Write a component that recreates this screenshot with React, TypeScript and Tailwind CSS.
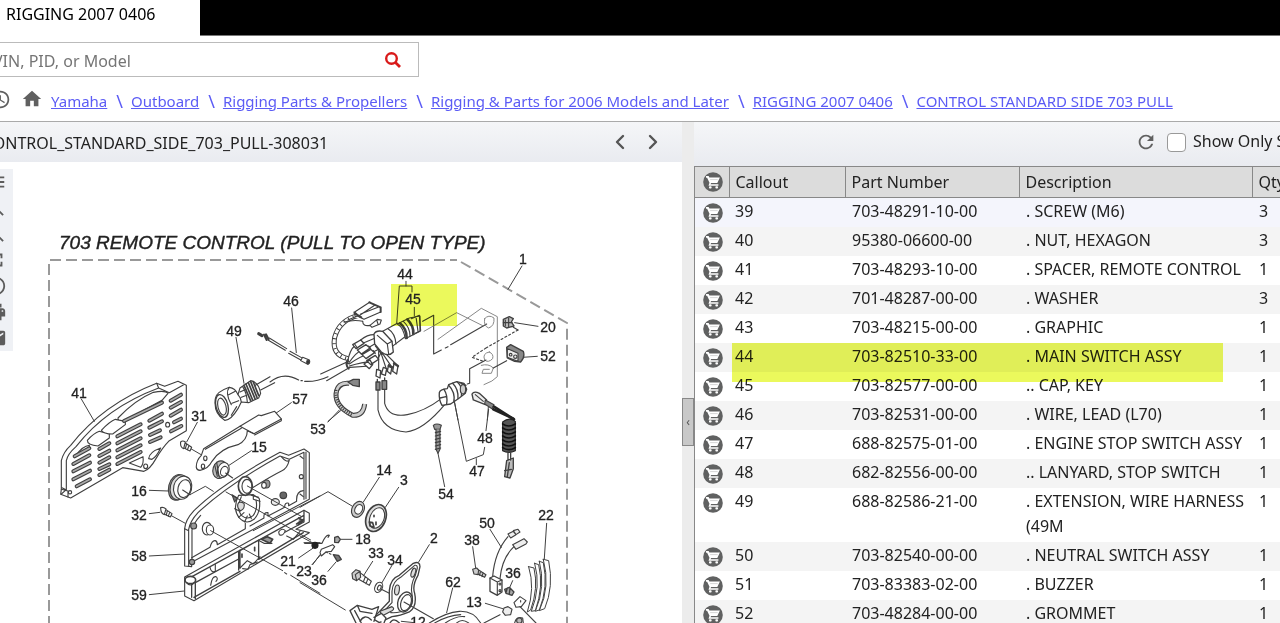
import { ChevronLeft, ChevronRight } from "lucide-react"
import {
  MdAccessTime,
  MdEmail,
  MdFullscreen,
  MdHome,
  MdInfoOutline,
  MdMenu,
  MdPrint,
  MdRefresh,
  MdZoomIn,
  MdZoomOut,
} from "react-icons/md"

const crumbs = [
  "Yamaha",
  "Outboard",
  "Rigging Parts & Propellers",
  "Rigging & Parts for 2006 Models and Later",
  "RIGGING 2007 0406",
  "CONTROL STANDARD SIDE 703 PULL",
]

const tools = [
  { icon: MdMenu, label: "Menu" },
  { icon: MdZoomIn, label: "Zoom in" },
  { icon: MdZoomOut, label: "Zoom out" },
  { icon: MdFullscreen, label: "Fit to screen" },
  { icon: MdInfoOutline, label: "Information" },
  { icon: MdPrint, label: "Print" },
  { icon: MdEmail, label: "Email" },
]

const parts = [
  { callout: "39", number: "703-48291-10-00", description: ". SCREW (M6)", qty: 3 },
  { callout: "40", number: "95380-06600-00", description: ". NUT, HEXAGON", qty: 3 },
  { callout: "41", number: "703-48293-10-00", description: ". SPACER, REMOTE CONTROL", qty: 1 },
  { callout: "42", number: "701-48287-00-00", description: ". WASHER", qty: 3 },
  { callout: "43", number: "703-48215-00-00", description: ". GRAPHIC", qty: 1 },
  { callout: "44", number: "703-82510-33-00", description: ". MAIN SWITCH ASSY", qty: 1 },
  { callout: "45", number: "703-82577-00-00", description: ".. CAP, KEY", qty: 1 },
  { callout: "46", number: "703-82531-00-00", description: ". WIRE, LEAD (L70)", qty: 1 },
  { callout: "47", number: "688-82575-01-00", description: ". ENGINE STOP SWITCH ASSY", qty: 1 },
  { callout: "48", number: "682-82556-00-00", description: ".. LANYARD, STOP SWITCH", qty: 1 },
  { callout: "49", number: "688-82586-21-00", description: ". EXTENSION, WIRE HARNESS (49M", qty: 1 },
  { callout: "50", number: "703-82540-00-00", description: ". NEUTRAL SWITCH ASSY", qty: 1 },
  { callout: "51", number: "703-83383-02-00", description: ". BUZZER", qty: 1 },
  { callout: "52", number: "703-48284-00-00", description: ". GROMMET", qty: 1 },
]

// [label, x, y] in diagram units
const callouts: [string, number, number][] = [
  ["1", 523, 264],
  ["44", 405, 279],
  ["45", 413, 304],
  ["20", 548, 332],
  ["52", 548, 361],
  ["46", 291, 306],
  ["49", 234, 336],
  ["41", 79, 398],
  ["31", 199, 421],
  ["57", 300, 404],
  ["15", 259, 452],
  ["16", 139, 496],
  ["32", 139, 520],
  ["58", 139, 561],
  ["59", 139, 600],
  ["53", 318, 434],
  ["14", 384, 475],
  ["3", 404, 485],
  ["54", 446, 499],
  ["47", 477, 476],
  ["48", 485, 443],
  ["22", 546, 520],
  ["50", 487, 528],
  ["38", 472, 545],
  ["36", 513, 578],
  ["13", 474, 607],
  ["2", 434, 543],
  ["18", 363, 544],
  ["33", 376, 558],
  ["34", 395, 565],
  ["21", 288, 566],
  ["23", 304, 576],
  ["36", 319, 585],
  ["62", 453, 587],
  ["12", 418, 627],
]

const grilleSlots =
  "M104 289L148 265M100 312L148 286M100 334L150 308M100 358L150 332M110 379L150 358M178 267L208 250M178 288L208 272M178 308L208 292M178 327L208 313M178 345L208 329M232 229L302 193M232 250L302 214M232 271L302 235M232 292L302 256M232 312L302 276M252 183L366 128M328 182L366 161M328 203L366 184M330 225L360 211M330 246L362 232M392 122L423 104M392 143L423 126M392 167L423 149M402 187L423 176M393 214L424 198"

function CartIcon() {
  return (
    <svg viewBox="0 0 20 20" className="block size-5" aria-hidden="true">
      <circle cx="10" cy="10" r="9.8" fill="#606161" />
      <path d="M3 4.1h2.6l.8 1.4h10.5l-2.6 5.6H8.1l-.6 1.1h7.9v1.5H5.5l1-2.9-2.4-5.1H3z" fill="#fff" />
      <path d="M7.1 7.6h7.6" stroke="#bbb" strokeWidth=".6" />
      <rect x="6" y="14.3" width="2.6" height="2.2" rx=".8" fill="#fff" />
      <rect x="12.4" y="14.3" width="2.6" height="2.2" rx=".8" fill="#fff" />
    </svg>
  )
}

function Diagram() {
  return (
    <svg
      viewBox="0 162 682 461"
      width="682"
      height="461"
      className="block"
      fill="none"
      stroke="#404040"
      role="img"
      aria-label="703 remote control parts diagram"
    >
      {/* Frame */}
      <g stroke="#999" strokeWidth="2" strokeDasharray="11 5">
        <path d="M50 260H457" />
        <path d="M49 264V623" />
        <path d="M461 262L567 323V623" />
      </g>

      {/* Spacer, back plate, trim and harness plug */}
      <g transform="translate(40 360) scale(.3333)" strokeWidth="3.4" strokeLinejoin="round" strokeLinecap="round">
        <path d="M64 388V302Q70 276 92 256Q190 132 350 70L374 79L414 64L439 76V212L388 242Q368 262 348 296Q330 328 312 334L248 323L92 414L62 403Z" fill="#fff" />
        <path d="M79 389V302Q83 282 108 260Q200 142 356 84L388 98L430 75M64 388L84 393V411M66 383L78 389M79 389L64 402M356 84L350 70" />
        <path d="M108 286Q128 258 148 256V266L104 290ZM142 241Q162 219 178 214L208 223V234L174 258Q142 256 142 241ZM184 211Q210 184 226 178L256 184V194L218 222Q190 222 184 211ZM234 174Q286 120 340 97Q376 90 384 100L366 121L254 182Q232 184 234 174Z" />
        <path d="M268 309L309 290Q312 312 302 322ZM326 296Q328 276 362 264Q350 290 336 298Z" />
        <circle cx="90" cy="397" r="5" />
        <ellipse cx="383" cy="194" rx="6" ry="7" />
        <ellipse cx="317" cy="319" rx="6" ry="7" />
        <path d={grilleSlots} strokeWidth="12" />
        <path d={grilleSlots} strokeWidth="5" stroke="#aaa" />

        <path d="M124 117L163 184M472 187L440 246M454 267L492 289M754 128L706 161M634 272L564 318M328 391L384 393M428 390L450 404L496 379L520 394M328 461L360 457M394 467L436 490M328 588L436 582M328 704L434 693" strokeWidth="3" />

        {/* Screws 31 and 32 */}
        <path d="M422 246Q428 240 436 246L431 266Q420 262 422 246ZM436 249L455 262L450 273L432 264M440 252L436 266M447 257L442 270M362 443Q370 440 378 447L373 464Q362 460 362 443ZM378 449L396 461L391 471L374 463M382 452L379 466M389 457L385 469" />

        {/* Lever 57 */}
        <path d="M469 322Q468 302 484 286L491 266L600 199L656 165L664 167L704 154L724 177L642 221L622 212Q622 240 594 254Q540 266 516 304Q504 328 480 331Q470 330 469 322Z" fill="#fff" />
        <path d="M600 199L642 221M496 268L604 205M644 225L724 182V177" />
        <ellipse cx="496" cy="295" rx="5" ry="7" />
        <ellipse cx="489" cy="319" rx="5" ry="7" />

        {/* Bushes 15 and 16 */}
        <ellipse cx="540" cy="329" rx="21" ry="27" transform="rotate(18 540 329)" fill="#bbb" />
        <ellipse cx="550" cy="330" rx="17" ry="23" transform="rotate(18 550 330)" fill="#fff" />
        <ellipse cx="553" cy="334" rx="11" ry="15" transform="rotate(18 553 334)" />
        <path d="M524 314L532 349M530 307L538 353M557 339L578 354" />
        <ellipse cx="412" cy="382" rx="26" ry="39" transform="rotate(14 412 382)" fill="#999" />
        <ellipse cx="418" cy="382" rx="27" ry="38" transform="rotate(14 418 382)" fill="#ddd" />
        <ellipse cx="428" cy="383" rx="27" ry="35" transform="rotate(14 428 383)" fill="#fff" />
        <ellipse cx="433" cy="386" rx="19" ry="27" transform="rotate(14 433 386)" />
        <path d="M428 390L450 404" />

        {/* Plate 58 */}
        <path d="M434 618V506Q436 480 462 452Q540 374 720 277L746 286L792 267L808 278V418L455 607V620Z" fill="#fff" />
        <path d="M446 618V508Q450 484 474 458Q560 376 720 288L748 298L792 277V418M456 603V510Q460 490 482 466M798 276V416M434 506L446 512" />
        <path d="M724 290Q740 310 748 300Q742 326 726 332Q690 350 640 382M455 593L510 562Q516 540 526 542Q532 544 532 554L616 506V490M630 498L672 474Q670 456 684 458V468L734 442Q734 426 746 430V437L770 424Q768 394 790 392" />
        <path d="M596 406Q576 446 598 474Q618 496 642 478Q664 456 658 416L640 404ZM604 410Q588 442 604 466Q624 482 640 466Q654 446 648 420" fill="#fff" />
        <path d="M584 446L600 454M596 472L612 458M656 412L634 406M614 486L622 468M634 476L628 462M640 406V418L660 424" />
        <ellipse cx="616" cy="378" rx="21" ry="28" fill="#fff" strokeWidth="5" />
        <ellipse cx="621" cy="379" rx="15" ry="21" />
        <path d="M594 431Q598 422 612 430Q616 446 602 452Q590 446 594 431Z" fill="#ddd" />
        <path d="M576 404L592 414L584 426Z" fill="#777" />
        <ellipse cx="680" cy="372" rx="10" ry="12" fill="#999" />
        <ellipse cx="672" cy="376" rx="7" ry="9" fill="#fff" />
        <ellipse cx="730" cy="406" rx="10" ry="10" fill="#666" />
        <ellipse cx="706" cy="426" rx="12" ry="10" fill="#eee" />
        <circle cx="461" cy="498" r="9" fill="#999" />
        <circle cx="456" cy="606" r="8" fill="#999" />
        <ellipse cx="501" cy="506" rx="14" ry="19" fill="#fff" />
        <ellipse cx="510" cy="510" rx="11" ry="15" fill="#fff" />
        <circle cx="784" cy="350" r="6" />
        <path d="M780 288L790 296M780 402L790 410" />

        {/* Trim 59 */}
        <path d="M434 651L792 451L808 460V486L768 508L808 518L462 722L434 708Z" fill="#fff" />
        <path d="M434 662L792 466M455 712V660M466 668L596 597M466 716V664M462 712L600 634M596 574V630M600 570V624M656 540V598M656 598L790 518M596 574L656 540M792 451V486L736 516" strokeWidth="4" />
        <path d="M510 622Q514 640 526 634V614M512 676Q516 648 528 650Q536 656 528 664M600 624L622 602L640 612L660 590" />
        <ellipse cx="451" cy="660" rx="16" ry="11" fill="#fff" strokeWidth="5" />
        <path d="M440 668Q450 682 464 668" />
        <path d="M664 538L682 530L698 538L690 550ZM776 474L790 482L776 494M770 492L790 478M606 582V592M644 562V572" fill="#999" strokeWidth="5" />
        <path d="M658 542L672 550L696 550M716 516Q726 502 736 512Q730 530 718 524ZM740 528L760 538L780 514M608 626L624 628L630 614L652 606" />
        <path d="M622 378L782 468M558 396L812 540M512 512L728 632M752 646L840 700M640 512L840 408" strokeWidth="3" />
        <path d="M734 638L740 642" />
        <path d="M776 594L820 564M818 614L840 584M792 548L840 548" strokeWidth="3" />

        {/* Plug 49 */}
        <path d="M588 -68L612 70" strokeWidth="3" />
        <path d="M526 116Q528 96 568 82Q586 84 594 104L600 84L632 62Q656 66 662 100L656 114L626 128L604 126L594 146Q572 182 554 181Q520 160 526 116Z" fill="#fff" />
        <ellipse cx="546" cy="138" rx="18" ry="35" transform="rotate(-14 546 138)" strokeWidth="4" />
        <ellipse cx="546" cy="140" rx="12" ry="26" transform="rotate(-14 546 140)" />
        <path d="M568 82Q554 98 574 134M576 130L596 122M566 104L586 94M574 166L590 140M594 104Q602 112 604 126M608 80Q620 98 622 126M600 96L618 88M604 112L620 106" />
        <path d="M612 76L632 122M618 72L638 120M625 68L645 116M632 65L651 112M640 66L656 106" strokeWidth="5" />
        <path d="M646 76L690 50M662 90L704 68M690 66Q730 34 776 60M794 64Q830 66 864 50" />
        <path d="M783 62L787 62" />
      </g>

      {/* Lead 46 */}
      <g transform="translate(40 220) scale(.3333)" strokeWidth="3.2" strokeLinecap="round">
        <path d="M755 264L769 398" strokeWidth="3" />
        <path d="M656 342L666 349M688 354L740 386M684 360L736 391M750 394L790 416M746 400L784 421" />
        <path d="M656 341L666 347" strokeWidth="9" />
        <path d="M672 344L680 360M678 343L686 358" strokeWidth="6" />
        <path d="M788 412L808 420Q812 428 804 433L782 422Z" fill="#fff" />
        <ellipse cx="804" cy="426" rx="4" ry="6" fill="#333" />
      </g>

      {/* Main switch, key cap, bracket outline, clamp, stop switch */}
      <g transform="translate(320 220) scale(.3333)" strokeWidth="3.4" strokeLinejoin="round" strokeLinecap="round">
        <path d="M606 138L564 208M584 308L654 319M608 412L652 409M283 262V288M258 184V198M230 312L238 198H276V216M404 548L414 600M505 562L502 600M62 572L24 604" strokeWidth="3" />
        <path d="M308 304L341 286V402L364 390M376 384L384 380M392 374L500 312" />
        <g stroke="#888" strokeWidth="3">
          <path d="M312 334L410 278L490 318M354 358L484 265L532 290V470Q520 484 492 494" />
          <path d="M494 296Q506 282 522 294Q524 318 506 324Q490 318 494 296ZM508 396Q522 402 518 416Q504 430 494 420Q486 400 508 396ZM484 436Q506 430 520 444L514 460H486L490 448H508" />
        </g>
        <path d="M594 330L498 384M498 384L456 412L490 424" strokeDasharray="6 7" />
        <path d="M580 322L594 330M442 492L449 490V446L498 420M520 444L560 422" />

        {/* Connector 20 and grommet 52 */}
        <path d="M550 298L568 290L580 296L574 306L582 318L560 324L550 318Z" fill="#bbb" strokeWidth="4" />
        <path d="M556 300V318M566 294V322M550 308H576" />
        <path d="M560 382L572 374L610 394Q616 412 602 426L584 424L562 414Z" fill="#888" strokeWidth="4" />
        <path d="M562 386L594 400V424L562 412Z" fill="#eee" />
        <circle cx="572" cy="404" r="4" />
        <circle cx="586" cy="410" r="5" />

        {/* Corrugated harness */}
        <path d="M116 286Q58 300 44 352Q34 406 84 416" strokeWidth="15" strokeLinecap="butt" />
        <path d="M116 286Q58 300 44 352Q34 406 84 416" stroke="#fff" strokeWidth="9" strokeLinecap="butt" />
        <path d="M116 286Q58 300 44 352Q34 406 84 416" strokeWidth="11" strokeDasharray="3 12" strokeLinecap="butt" />
        <path d="M102 276L142 250L182 264L184 276L134 304L106 292Z" fill="#fff" stroke="none" />
        <path d="M104 276L150 246M112 288L132 298L182 276M104 276L116 288L164 256M122 282L174 262M102 276L106 290M84 300L112 288M72 306Q104 298 128 304" />
        <path d="M148 247L182 262V276M104 280L124 292" strokeWidth="6" />
        <path d="M128 304Q128 320 150 316L172 298L184 300L180 312L156 322L150 316M170 300L174 312" />

        {/* Bundle of leads */}
        <path d="M2 462L86 424M20 482L90 442M82 430Q88 390 106 376M84 432Q108 396 130 386M88 432Q120 410 148 400M88 438Q126 426 160 424M90 442L150 438" />
        <path d="M84 420Q74 432 86 446" strokeWidth="6" />
        <path d="M98 374L122 360L132 370L108 386ZM112 390L138 374L150 384L124 402ZM126 404L152 388L164 398L138 416ZM140 422L166 406L176 418L152 434ZM132 432L150 420L158 434L148 446Z" fill="#fff" strokeWidth="4" />
        <path d="M122 360Q142 344 162 344M132 368L166 354M150 380L170 368M164 394L184 384M176 412L186 392M104 372L112 384M146 378L152 386M160 392L166 400" />
        <path d="M176 386L176 450M182 396L198 444M186 398L212 436M190 394L228 432M166 378L186 404" />
        <path d="M170 448L182 452L180 474L168 468ZM190 442L200 446L196 466L184 462ZM206 434L216 440L212 462L202 454ZM222 430L234 438L230 462L218 454Z" fill="#fff" strokeWidth="4" />
        <path d="M222 430L234 438M206 438L216 442" strokeWidth="7" />

        {/* Switch body */}
        <path d="M184 336L232 310Q256 322 258 348L216 380Z" fill="#fff" />
        <path d="M162 342Q168 330 188 334L216 364L220 396Q206 412 184 396L164 372Z" fill="#fff" strokeWidth="4" />
        <path d="M172 346L202 372L206 402M202 372L216 364M204 326Q226 340 228 372" />
        <path d="M232 312L268 294L300 288V334L256 356Q250 322 232 312Z" fill="#fff" />
        <path d="M240 310Q260 326 260 354M262 298Q282 318 280 342" strokeWidth="8" />
        <path d="M250 304Q270 322 270 348M274 296L298 286L302 332L286 340M288 290L294 334" />

        {/* Cable down to the stop switch */}
        <path d="M174 500V570Q188 632 258 636Q310 632 376 552" />
        <path d="M194 500V550Q206 594 262 584Q314 574 364 536" />
        <path d="M168 486H180V510H168ZM186 482H200V508H186ZM172 478V486M194 474V482" fill="#888" strokeWidth="4" />
        <path d="M358 518Q360 508 382 506L386 494L410 485L432 490L440 508L436 520L418 534L392 552L366 556Q356 540 358 518Z" fill="#fff" strokeWidth="4" />
        <path d="M372 508Q384 526 380 552M386 496Q406 516 402 546M398 490Q416 508 414 536M412 486Q430 502 424 526M420 488L438 496M360 534L378 530" strokeWidth="4" />
        <ellipse cx="429" cy="508" rx="8" ry="14" fill="#ccc" />

        {/* Clamp 53 */}
        <path d="M88 490Q52 486 48 522Q46 560 98 586Q130 588 134 552" strokeWidth="15" strokeLinecap="butt" />
        <path d="M88 490Q52 486 48 522Q46 560 98 586Q130 588 134 552" strokeWidth="8" stroke="#ccc" strokeLinecap="butt" />
        <path d="M48 510Q44 560 98 586" strokeWidth="9" strokeDasharray="3 4" strokeLinecap="butt" />
        <path d="M84 486L98 496L118 500V478L100 478Z" fill="#888" strokeWidth="4" />

        {/* Lanyard 48 */}
        <path d="M456 522Q462 512 478 520L500 540L496 554L460 540Z" fill="#eee" strokeWidth="4" />
        <path d="M466 524L490 544" />
        <path d="M496 540L522 554L516 566L494 552Z" fill="#888" />
        <path d="M522 560L582 598" strokeWidth="8" stroke="#222" />
      </g>

      {/* Lower right area */}
      <g transform="translate(300 400) scale(.3333)" strokeWidth="3.4" strokeLinejoin="round" strokeLinecap="round">
        <path d="M566 28L558 92M462 0L499 184L550 164L554 142M529 176V194M414 160L434 260M118 30L84 66M238 232L190 306M296 262L256 322M388 434L356 486M156 418H122M218 484L190 528M276 496L246 548M570 388L604 442M518 440L527 504M638 542L626 570M740 370L733 476M556 610L608 626M458 564L440 638M342 668L304 664M36 494L64 462M84 514L108 486M0 408L40 430M0 322L84 275L156 318M0 548L136 630" strokeWidth="3" />
        <path d="M580 28L640 56" strokeWidth="8" stroke="#222" />
        <path d="M608 66Q628 50 646 64V152Q626 162 608 152Z" fill="#555" stroke="#222" />
        <path d="M608 72Q626 84 646 72M608 84Q626 96 646 84M608 96Q626 108 646 96M608 108Q626 120 646 108M608 120Q626 132 646 120M608 132Q626 144 646 132M608 143Q626 155 646 143" stroke="#111" strokeWidth="5" />
        <path d="M624 158V180M632 158V180M620 182L640 174V206L630 234L614 230Z" fill="#bbb" strokeWidth="4" />
        <path d="M628 188L622 230M614 212L634 208" strokeWidth="4" />

        {/* Screw 54 */}
        <path d="M400 76Q410 68 424 76L420 88H404Z" fill="#999" />
        <path d="M408 88V148L414 160L420 148V88" fill="#999" />
        <path d="M406 98L422 94M406 108L422 104M406 118L422 114M406 128L422 124M406 138L422 134M406 148L422 144" />

        {/* Washers 14 and 3 */}
        <ellipse cx="174" cy="328" rx="18" ry="25" transform="rotate(25 174 328)" fill="#ccc" />
        <ellipse cx="176" cy="328" rx="11" ry="15" transform="rotate(25 176 328)" fill="#fff" />
        <ellipse cx="228" cy="354" rx="29" ry="42" transform="rotate(22 228 354)" fill="#ddd" strokeWidth="5" />
        <ellipse cx="231" cy="354" rx="21" ry="32" transform="rotate(22 231 354)" fill="#fff" />
        <path d="M222 346V350M208 366L218 368L222 382L210 378ZM228 366V374" strokeWidth="5" />

        {/* Small hardware 18, 21, 23, 36 */}
        <path d="M104 412L114 409L121 418L115 428L104 427Z" fill="#aaa" strokeWidth="4" />
        <path d="M14 430L66 430Q78 402 88 406L84 412" />
        <circle cx="45" cy="436" r="9" fill="#222" stroke="#222" />
        <path d="M64 448L98 434L104 440L94 454L78 456L64 468L60 458Z" fill="#fff" />
        <path d="M78 456L96 464" strokeDasharray="5 6" />
        <path d="M100 464L116 466L124 478L112 484Z" fill="#777" strokeWidth="4" />

        {/* Bolt 33 and washer 34 */}
        <path d="M156 520L168 509L180 514L182 532L170 542L158 536Z" fill="#ccc" />
        <path d="M166 524L180 514M166 524L170 542M180 518L214 544L208 556L176 538M196 530L190 546M204 536L198 551" />
        <ellipse cx="236" cy="562" rx="11" ry="16" transform="rotate(25 236 562)" />
        <ellipse cx="238" cy="563" rx="5" ry="8" transform="rotate(25 238 563)" />
        <path d="M244 568L268 580" />

        {/* Bracket 2 */}
        <path d="M268 572Q270 536 298 526L340 490Q360 482 360 500L354 526Q336 556 344 580Q352 620 328 636Q300 648 276 650L238 668L218 656L268 604Z" fill="#fff" strokeWidth="4" />
        <path d="M276 574Q278 544 302 532L344 496Q352 494 352 504L346 526Q330 558 336 582Q342 616 322 628Q300 640 272 638M276 574V608L234 652" />
        <ellipse cx="315" cy="606" rx="21" ry="31" transform="rotate(20 315 606)" fill="#fff" strokeWidth="4" />
        <ellipse cx="318" cy="608" rx="15" ry="25" transform="rotate(20 318 608)" />
        <ellipse cx="340" cy="518" rx="6" ry="14" transform="rotate(18 340 518)" fill="#ddd" />
        <ellipse cx="291" cy="570" rx="7" ry="15" transform="rotate(8 291 570)" fill="#ddd" />
        <path d="M240 634L276 620Q286 626 276 632L246 648Z" fill="#ddd" />
        <path d="M312 606L400 656" />
        <path d="M150 632L172 616L216 628L236 620L222 664M150 632L168 669M164 632L184 669M172 616L180 634L216 640M180 664Q194 640 214 660M222 652L244 640L258 654L252 669M270 669Q280 650 298 669" fill="#fff" strokeWidth="4" />
        <path d="M388 669Q440 636 478 634Q520 632 542 669M404 669Q444 646 482 644M436 669Q470 646 494 650M470 669Q486 654 506 669M552 669L600 644" />

        {/* Neutral switch 50 */}
        <path d="M578 530Q584 456 624 410M600 536Q606 474 642 440" />
        <path d="M624 402L640 394L648 404L632 414ZM640 392L654 388L660 396L648 404ZM638 434L672 416L682 426L678 432L648 448Z" fill="#eee" />
        <path d="M570 534L582 528L606 540V576L592 586L570 574Z" fill="#fff" strokeWidth="4" />
        <path d="M570 534L592 546V584M592 546L606 540" />
        <circle cx="600" cy="552" r="3" />
        <circle cx="600" cy="572" r="3" />
        <path d="M518 508L530 504L536 510L534 524L522 522ZM536 510L558 524L554 532L534 522M542 514L538 526M549 518L546 530" fill="#ccc" />
        <path d="M614 568L628 562L642 576L636 586L618 580ZM622 564L618 578M630 566L628 582" fill="#aaa" strokeWidth="4" />

        {/* Leaf springs 22 */}
        <g fill="#fff" strokeWidth="3">
          <path d="M730 478L746 482Q762 560 734 626L718 632Q752 560 730 478Z" />
          <path d="M718 484L730 488Q746 560 718 630L706 634Q738 560 718 484Z" />
          <path d="M704 490L716 494Q732 560 706 632L694 634Q724 560 704 490Z" />
          <path d="M686 500L702 504Q716 564 692 630L682 636Q706 564 686 500Z" />
        </g>
        <path d="M642 608L660 590L678 602L664 620L648 622ZM662 602V606" fill="#fff" />
        <path d="M612 624L624 620L636 628L632 644L616 646L608 636Z" fill="#eee" />
        <path d="M660 620L708 669M644 669Q648 648 668 654L670 669" />
        <circle cx="658" cy="662" r="8" fill="#bbb" />
      </g>

      {/* Highlight marker over 44 / 45 */}
      <rect x="391" y="284" width="66" height="42" fill="#ebf95c" stroke="none" className="mix-blend-multiply" />

      <g fill="#222" stroke="#222" fontFamily="'Liberation Sans', Arial, sans-serif">
        <text x="59" y="249" fontSize="19" fontStyle="italic" strokeWidth=".4">
          703 REMOTE CONTROL (PULL TO OPEN TYPE)
        </text>
        <g fontSize="14" textAnchor="middle" strokeWidth=".3">
          {callouts.map(([label, x, y]) => (
            <text key={`${label}-${x}`} x={x} y={y}>
              {label}
            </text>
          ))}
        </g>
      </g>
    </svg>
  )
}

function PartsTable() {
  return (
    <table className="w-[640px] table-fixed border-collapse text-left text-base leading-[25px] text-[#222]">
      <colgroup>
        <col className="w-[34px]" />
        <col className="w-[116px]" />
        <col className="w-[174px]" />
        <col className="w-[233px]" />
        <col />
      </colgroup>
      <thead className="bg-[#dcdcdc]">
        <tr className="h-[31px] border-y border-[#888]">
          <th className="border-r border-[#888] pl-2" aria-label="Add to cart">
            <CartIcon />
          </th>
          <th className="border-r border-[#888] px-[6px] font-normal">Callout</th>
          <th className="border-r border-[#888] px-[6px] font-normal">Part Number</th>
          <th className="border-r border-[#888] px-[6px] font-normal">Description</th>
          <th className="px-[6px] font-normal">Qty</th>
        </tr>
      </thead>
      <tbody>
        {parts.map((part, i) => (
          <tr
            key={part.callout}
            className={`align-top ${i === 0 ? "bg-[#f4f5fc]" : i % 2 ? "bg-[#f4f4f4]" : "bg-white"}`}
          >
            <td className="pt-[5px] pl-2">
              <button type="button" aria-label={`Add ${part.number} to cart`} className="block">
                <CartIcon />
              </button>
            </td>
            <td className="relative px-[6px] pt-px pb-[3px]">
              {part.callout}
              {part.callout === "44" && (
                <div className="pointer-events-none absolute top-0 left-[3px] z-10 h-[39px] w-[491px] bg-[#ebf95c] mix-blend-multiply" />
              )}
            </td>
            <td className="px-[7px] pt-px pb-[3px]">{part.number}</td>
            <td className="pt-px pb-[3px] pl-[7px]">{part.description}</td>
            <td className="px-[7px] pt-px pb-[3px]">{part.qty}</td>
          </tr>
        ))}
      </tbody>
    </table>
  )
}

export default function App() {
  return (
    <div className="flex h-screen flex-col overflow-hidden bg-white font-['Noto_Sans',sans-serif] text-base text-[#222]">
      {/* Tab strip */}
      <header className="flex h-9 shrink-0 border-b border-[#777] bg-black">
        <div className="-mb-px w-[200px] bg-white pt-[2px] pl-[6px] text-black">RIGGING 2007 0406</div>
      </header>

      {/* Search */}
      <form className="mt-[6px] -ml-[11px] flex h-[35px] w-[430px] shrink-0 items-center border border-[#bbb] pr-4">
        <input
          type="search"
          aria-label="Search"
          placeholder="VIN, PID, or Model"
          className="min-w-0 flex-1 pt-[2px] pl-[3px] text-base outline-none placeholder:text-[#757575]"
        />
        <button type="button" aria-label="Search" className="text-[#d91a1a]">
          <svg viewBox="0 0 18 18" className="size-[18px]" fill="none" stroke="currentColor" strokeWidth="2.4">
            <circle cx="7.5" cy="7.5" r="5.3" />
            <path d="M11.2 11.2L16 16" strokeWidth="2.8" />
          </svg>
        </button>
      </form>

      {/* Breadcrumbs */}
      <nav className="-ml-[10px] flex h-[45px] shrink-0 items-center border-b border-[#aaa] pt-1 text-[15px] whitespace-nowrap text-[#5c5cf5]">
        <MdAccessTime className="mb-1 size-[21px] shrink-0 text-[#606060]" />
        <MdHome className="mr-2 mb-1 ml-[10px] size-[22px] shrink-0 text-[#606060]" />
        {crumbs.map((crumb, i) => (
          <span key={crumb} className="flex items-center">
            {i > 0 && <span className="pr-2 pl-[9px] text-lg leading-none">\</span>}
            <a href="#" className="underline">
              {crumb}
            </a>
          </span>
        ))}
      </nav>

      <main className="flex min-h-0 flex-1">
        {/* Drawing pane */}
        <section className="flex w-[682px] shrink-0 flex-col overflow-hidden">
          <div className="flex h-10 shrink-0 items-center bg-gradient-to-b from-[#f5f6f8] to-[#e9ebf0] pr-[17px]">
            <h1 className="-ml-[17px] flex-1 pt-[2px]">CONTROL_STANDARD_SIDE_703_PULL-308031</h1>
            <button type="button" aria-label="Previous" className="text-[#555]">
              <ChevronLeft className="size-6" strokeWidth={2.4} />
            </button>
            <button type="button" aria-label="Next" className="ml-[9px] text-[#555]">
              <ChevronRight className="size-6" strokeWidth={2.4} />
            </button>
          </div>
          <div className="relative min-h-0 flex-1">
            <Diagram />
            <div className="absolute top-[7px] left-0 flex w-[13px] flex-col items-end gap-1 bg-[#eff1f5] pt-[2px] pr-[6px] pb-[2px] text-[#5c5c5c]">
              {tools.map(({ icon: Icon, label }) => (
                <button key={label} type="button" aria-label={label} className="block">
                  <Icon className="size-[22px]" />
                </button>
              ))}
            </div>
          </div>
        </section>

        {/* Splitter */}
        <div className="flex w-3 shrink-0 flex-col justify-center bg-[#ececec] pt-[98px]">
          <button
            type="button"
            aria-label="Collapse pane"
            className="h-[48px] w-3 border border-[#888] bg-[#c8c8c8] text-xs leading-none text-[#555]"
          >
            ‹
          </button>
        </div>

        {/* Parts pane */}
        <section className="flex min-w-0 flex-1 flex-col overflow-hidden">
          <div className="flex h-11 shrink-0 items-center justify-end bg-gradient-to-b from-[#f5f6f8] to-[#e9ebf0] pb-1">
            <div className="flex w-[145px] items-center overflow-hidden whitespace-nowrap">
              <button type="button" aria-label="Refresh" className="text-[#606060]">
                <MdRefresh className="size-[22px]" />
              </button>
              <input
                id="show-only"
                type="checkbox"
                className="ml-[10px] size-[19px] shrink-0 appearance-none rounded-[4px] border border-[#999] bg-white"
              />
              <label htmlFor="show-only" className="pb-[2px] pl-[7px]">
                Show Only Selected
              </label>
            </div>
          </div>
          <div className="min-h-0 flex-1 overflow-hidden border-l border-[#888]">
            <PartsTable />
          </div>
        </section>
      </main>
    </div>
  )
}
